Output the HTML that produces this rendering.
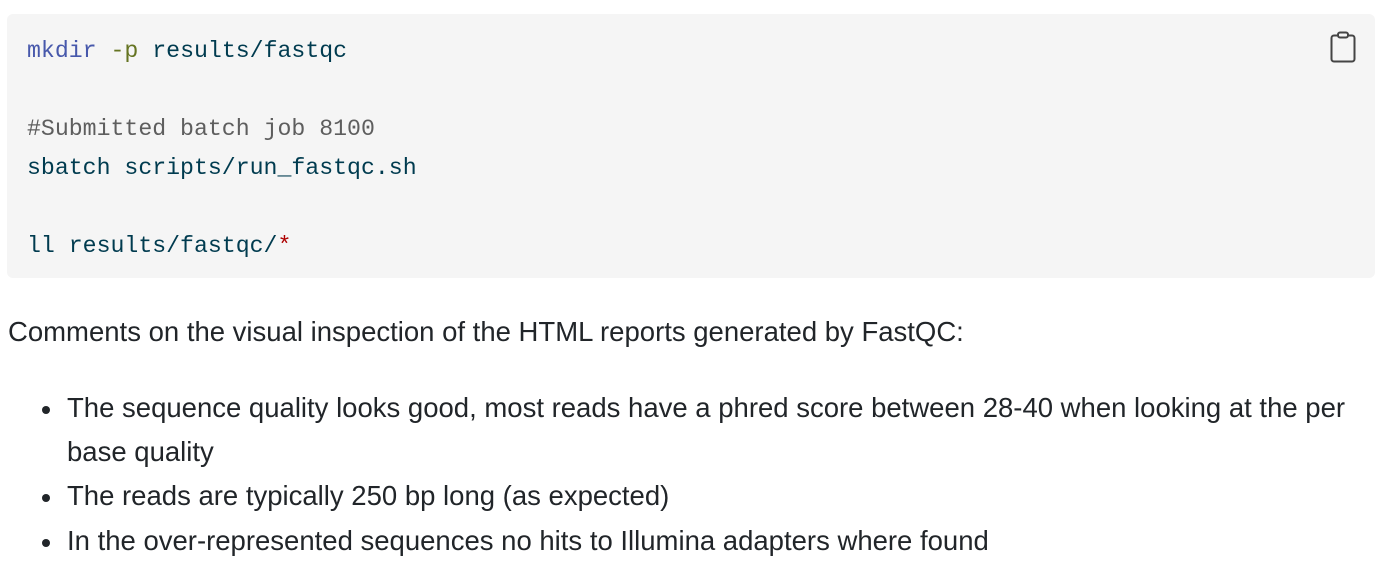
<!DOCTYPE html>
<html><head><meta charset="utf-8"><style>
html,body{margin:0;padding:0;background:#fff;width:1381px;height:570px;overflow:hidden}
.code{position:absolute;left:7px;top:14px;width:1368px;height:264px;background:#f5f5f5;border-radius:6px}
pre{margin:0;position:absolute;left:27px;top:32px;font-family:"Liberation Mono",monospace;font-size:23.2px;line-height:39px;color:#003b4f}
.b{color:#4758ab}.c{color:#5e5e5e}.r{color:#ad0000}
.clip{position:absolute;left:1330px;top:31px}
.t{position:absolute;font-family:"Liberation Sans",sans-serif;font-size:27.5px;color:#212529;white-space:nowrap}
.dot{position:absolute;width:8px;height:8px;border-radius:50%;background:#212529}
</style></head><body>
<div class="code"></div>
<pre><span class="b">mkdir</span> <span style="color:#657422">-p</span> results/fastqc

<span class="c">#Submitted batch job 8100</span>
sbatch scripts/run_fastqc.sh

ll results/fastqc/<span class="r">*</span></pre>
<svg class="clip" width="26" height="32" viewBox="0 0 26 32" fill="none" stroke="#444" stroke-width="2"><rect x="1.5" y="4.5" width="23" height="26" rx="2.5"/><rect x="8" y="1.5" width="10" height="5" rx="2" fill="#f5f5f5"/></svg>
<div class="t" style="left:8px;top:316px">Comments on the visual inspection of the HTML reports generated by FastQC:</div>
<div class="dot" style="left:42px;top:406px"></div>
<div class="t" style="left:67px;top:392px">The sequence quality looks good, most reads have a phred score between 28-40 when looking at the per</div>
<div class="t" style="left:67px;top:436px">base quality</div>
<div class="dot" style="left:42px;top:494px"></div>
<div class="t" style="left:67px;top:480px">The reads are typically 250 bp long (as expected)</div>
<div class="dot" style="left:42px;top:539px"></div>
<div class="t" style="left:67px;top:525px">In the over-represented sequences no hits to Illumina adapters where found</div>
</body></html>
